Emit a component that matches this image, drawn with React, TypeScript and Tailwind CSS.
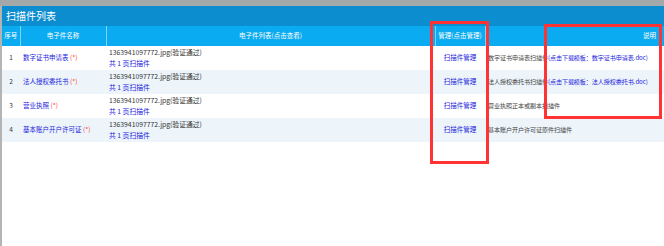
const rows = [
  { no: 1, name: '数字证书申请表', desc: '数字证书申请表扫描件', tpl: '(点击下载模板：数字证书申请表.doc)' },
  { no: 2, name: '法人授权委托书', desc: '法人授权委托书扫描件', tpl: '(点击下载模板：法人授权委托书.doc)' },
  { no: 3, name: '营业执照', desc: '营业执照正本或副本扫描件', tpl: '' },
  { no: 4, name: '基本账户开户许可证', desc: '基本账户开户许可证原件扫描件', tpl: '' },
];

export default function App() {
  return (
    <div
      className="relative w-[664px] h-[246px] bg-white overflow-hidden"
      style={{ fontFamily: '"Noto Sans CJK SC", "Liberation Sans", sans-serif' }}
    >
      <div className="h-[6px] bg-[#a3a8ab]" />
      <div className="border-l-2 border-[#b4b4b4] h-[240px]">
        <div className="h-[20px] bg-[#0b8dd0] text-white text-[10px] leading-[20px] pl-1">扫描件列表</div>
        <table className="w-full border-collapse table-fixed text-[6.5px]">
          <colgroup>
            <col className="w-[18px]" />
            <col className="w-[86px]" />
            <col className="w-[329px]" />
            <col className="w-[50px]" />
            <col />
          </colgroup>
          <thead>
            <tr className="h-[20px] bg-[#0aabf0] text-white">
              <th className="font-normal border-r border-[#7fd3f7] text-center whitespace-nowrap">序号</th>
              <th className="font-normal border-r border-[#7fd3f7] text-center">电子件名称</th>
              <th className="font-normal border-r border-[#7fd3f7] text-center">电子件列表(点击查看)</th>
              <th className="font-normal border-r border-[#7fd3f7] text-center whitespace-nowrap">管理(点击管理)</th>
              <th className="font-normal text-right pr-2">说明</th>
            </tr>
          </thead>
          <tbody>
            {rows.map((r, i) => (
              <tr key={r.no} className={`h-[24px] ${i % 2 === 1 ? 'bg-[#edf5fa]' : 'bg-white'}`}>
                <td className="text-center text-[#333]">{r.no}</td>
                <td className="pl-[3px] whitespace-nowrap">
                  <span className="text-[#2222dd]">{r.name}</span>{' '}
                  <span className="text-[#ff3333]">(*)</span>
                </td>
                <td className="pl-[3px] leading-[11px] text-[6.8px]">
                  <div className="text-[#333]">1363941097772.jpg(验证通过)</div>
                  <div className="text-[#2222dd]">共 1 页扫描件</div>
                </td>
                <td className="text-center text-[#2222dd] whitespace-nowrap">扫描件管理</td>
                <td className="pl-[3px] whitespace-nowrap text-[#444] text-[6.1px] tracking-[-0.1px]">
                  {r.desc}
                  <span className="text-[#2222dd]">{r.tpl}</span>
                </td>
              </tr>
            ))}
          </tbody>
        </table>
      </div>
      <div className="absolute left-[430px] top-[21px] w-[59px] h-[143px] border-[3px] border-[#ff3333]" />
      <div className="absolute left-[544px] top-[24px] w-[118px] h-[95px] border-[3px] border-[#ff3333]" />
    </div>
  );
}
